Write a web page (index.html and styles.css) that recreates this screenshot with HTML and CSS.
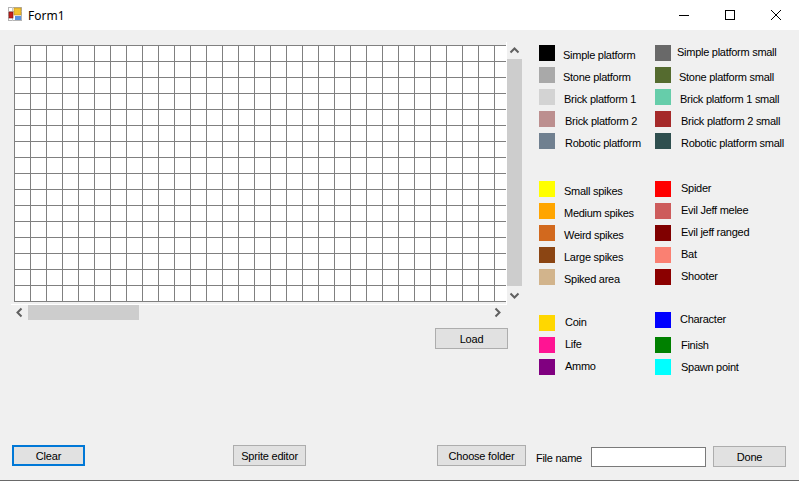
FILE: index.html
```html
<!DOCTYPE html>
<html>
<head>
<meta name="viewport" content="width=device-width, initial-scale=1.0">
<title>Form1</title>
<link rel="stylesheet" href="styles.css">
</head>
<body>

<div class="titlebar">
  <svg class="app-icon" width="14" height="14" viewBox="0 0 14 14">
    <rect x="0.5" y="0.5" width="13" height="13" fill="#fff" stroke="#b4b4b4"/>
    <path d="M4.5 0v14M0 4.5h14M0 9.5h4" stroke="#c8c8c8" fill="none"/>
    <rect x="6" y="1" width="7" height="7" fill="#f2c230" stroke="#b98a20" stroke-width="0.6"/>
    <rect x="1" y="5" width="4" height="6" fill="#c4201c" stroke="#7a1512" stroke-width="0.6"/>
    <rect x="7" y="9" width="6" height="4" fill="#5b94e0"/>
  </svg>
  <span class="title">Form1</span>
  <div class="window-buttons">
    <svg width="12" height="12" viewBox="0 0 12 12"><path d="M1 6.5h10" stroke="#000" fill="none"/></svg>
    <svg width="12" height="12" viewBox="0 0 12 12"><rect x="1.5" y="1.5" width="9" height="9" stroke="#000" fill="none"/></svg>
    <svg width="12" height="12" viewBox="0 0 12 12"><path d="M1 1l10 10M11 1L1 11" stroke="#000" fill="none"/></svg>
  </div>
</div>

<div class="form">
  <div class="main">
    <div class="editor">
      <div class="stage">
        <div class="level-panel"><div class="level-grid"></div></div>
        <div class="vscroll">
          <svg width="15" height="15" viewBox="0 0 15 15"><path d="M3.5 9.5l4-4 4 4" stroke="#606060" stroke-width="2" fill="none"/></svg>
          <div class="vthumb"></div>
          <svg class="varrow-down" width="15" height="15" viewBox="0 0 15 15"><path d="M3.5 5.5l4 4 4-4" stroke="#606060" stroke-width="2" fill="none"/></svg>
        </div>
        <div class="hscroll">
          <svg width="17" height="15" viewBox="0 0 17 15"><path d="M10.5 3.5l-4 4 4 4" stroke="#606060" stroke-width="2" fill="none"/></svg>
          <div class="hthumb"></div>
          <svg class="harrow-right" width="15" height="15" viewBox="0 0 15 15"><path d="M5.5 3.5l4 4-4 4" stroke="#606060" stroke-width="2" fill="none"/></svg>
        </div>
      </div>
      <button class="button load-button">Load</button>
    </div>

    <div class="palette">
      <div class="group">
        <div class="item"><i class="swatch c-black"></i><span class="label g8">Simple platform</span></div>
        <div class="item"><i class="swatch c-dimgray"></i><span class="label g6 up">Simple platform small</span></div>
        <div class="item"><i class="swatch c-darkgray"></i><span class="label g8">Stone platform</span></div>
        <div class="item"><i class="swatch c-olive"></i><span class="label g8">Stone platform small</span></div>
        <div class="item"><i class="swatch c-lightgray"></i><span class="label g9">Brick platform 1</span></div>
        <div class="item"><i class="swatch c-aquamarine"></i><span class="label g9">Brick platform 1 small</span></div>
        <div class="item"><i class="swatch c-rosy"></i><span class="label g10">Brick platform 2</span></div>
        <div class="item"><i class="swatch c-brown"></i><span class="label g10">Brick platform 2 small</span></div>
        <div class="item"><i class="swatch c-slate"></i><span class="label g10">Robotic platform</span></div>
        <div class="item"><i class="swatch c-darkslate"></i><span class="label g10">Robotic platform small</span></div>
      </div>

      <div class="group group-enemies">
        <div class="item"><i class="swatch c-yellow"></i><span class="label g9">Small spikes</span></div>
        <div class="item"><i class="swatch c-red"></i><span class="label g10 up">Spider</span></div>
        <div class="item"><i class="swatch c-orange"></i><span class="label g9">Medium spikes</span></div>
        <div class="item"><i class="swatch c-indian"></i><span class="label g10 up">Evil Jeff melee</span></div>
        <div class="item"><i class="swatch c-chocolate"></i><span class="label g9">Weird spikes</span></div>
        <div class="item"><i class="swatch c-maroon"></i><span class="label g10 up">Evil jeff ranged</span></div>
        <div class="item"><i class="swatch c-saddle"></i><span class="label g9">Large spikes</span></div>
        <div class="item"><i class="swatch c-salmon"></i><span class="label g10 up">Bat</span></div>
        <div class="item"><i class="swatch c-tan"></i><span class="label g9">Spiked area</span></div>
        <div class="item"><i class="swatch c-darkred"></i><span class="label g10 up">Shooter</span></div>
      </div>

      <div class="group group-last">
        <div class="item"><i class="swatch c-gold"></i><span class="label g10 up">Coin</span></div>
        <div class="item"><i class="swatch swatch-high c-blue"></i><span class="label g9 up">Character</span></div>
        <div class="item"><i class="swatch c-pink"></i><span class="label g10 up">Life</span></div>
        <div class="item"><i class="swatch c-green"></i><span class="label g10 flat">Finish</span></div>
        <div class="item"><i class="swatch c-purple"></i><span class="label g10 up">Ammo</span></div>
        <div class="item"><i class="swatch c-cyan"></i><span class="label g10 flat">Spawn point</span></div>
      </div>
    </div>
  </div>

  <div class="footer">
    <button class="button clear-button">Clear</button>
    <button class="button sprite-button">Sprite editor</button>
    <button class="button folder-button">Choose folder</button>
    <span class="file-label">File name</span>
    <input class="file-input" type="text" name="fileName">
    <button class="button done-button">Done</button>
  </div>
</div>

</body>
</html>
```

FILE: styles.css
```css
* {
  box-sizing: border-box;
}

html, body {
  margin: 0;
  height: 481px;
  overflow: hidden;
}

body {
  font: 11px "Liberation Sans", Arial, sans-serif;
  letter-spacing: -0.27px;
  color: #000;
  background-color: #f0f0f0;
  border-bottom: 1px solid #696969;
}

/* title bar */
.titlebar {
  display: flex;
  align-items: center;
  height: 30px;
  padding-left: 8px;
  background-color: #fff;
}

.app-icon {
  margin-right: 6px;
  margin-bottom: 2px;
}

.title {
  font: 12px "Noto Sans", sans-serif;
  letter-spacing: normal;
}

.window-buttons {
  display: flex;
  margin-left: auto;
  margin-right: 17px;
  gap: 34px;
}

/* main form */
.form {
  display: flex;
  flex-direction: column;
  justify-content: space-between;
  height: 450px;
}

.main {
  display: flex;
  padding: 12px 0 0 11px;
}

.editor {
  display: flex;
  flex-direction: column;
  align-items: flex-end;
  width: 511px;
}

.stage {
  display: grid;
  grid-template-columns: 496px 15px;
  grid-template-rows: 263px 16px;
}

.level-panel {
  padding: 3px 0 0 3px;
  border-right: 1px solid #fff;
  border-bottom: 1px solid #fff;
  overflow: hidden;
}

.level-grid {
  height: 257px;
  background-color: #fff;
  background-image:
    linear-gradient(to right, #808080 1px, transparent 1px),
    linear-gradient(to bottom, #808080 1px, transparent 1px);
  background-size: 16px 16px;
  border-bottom: 1px solid #808080;
}

.vscroll {
  display: flex;
  flex-direction: column;
  margin-top: 1px;
}

.vscroll svg {
  display: block;
  flex: none;
}

.vthumb {
  flex: none;
  height: 227px;
  margin-top: 1px;
  background-color: #cdcdcd;
}

.vscroll .varrow-down {
  margin-top: 2px;
}

.hscroll {
  display: flex;
  align-items: center;
  height: 15px;
}

.hthumb {
  width: 111px;
  height: 15px;
  background-color: #cdcdcd;
}

.harrow-right {
  margin-left: auto;
  margin-right: 2px;
}

.button {
  width: 73px;
  height: 21px;
  padding: 0;
  font: 11px "Liberation Sans", Arial, sans-serif;
  letter-spacing: -0.2px;
  color: #000;
  background-color: #e1e1e1;
  border: 1px solid #adadad;
}

.load-button {
  margin-top: 7px;
  margin-right: 14px;
}

/* colour palette */
.palette {
  margin-left: 17px;
  margin-top: 3px;
}

.group {
  display: grid;
  grid-template-columns: 116px 1fr;
  grid-auto-rows: 16px;
  row-gap: 6px;
  margin-bottom: 32px;
}

.group-enemies {
  margin-bottom: 30px;
}

.group-last {
  margin-bottom: 0;
}

.item {
  display: flex;
  white-space: nowrap;
}

.swatch {
  display: block;
  flex: none;
  width: 16px;
  height: 16px;
}

.swatch-high {
  margin-top: -3px;
}

.label {
  line-height: 16px;
  margin-top: 2px;
}

.up {
  margin-top: -1px;
}

.flat {
  margin-top: 0;
}

.swatch-high + .up {
  margin-top: -4px;
}

.g6 { margin-left: 6px; }
.g8 { margin-left: 8px; }
.g9 { margin-left: 9px; }
.g10 { margin-left: 10px; }

.c-black { background-color: #000000; }
.c-dimgray { background-color: #696969; }
.c-darkgray { background-color: #a9a9a9; }
.c-olive { background-color: #556b2f; }
.c-lightgray { background-color: #d3d3d3; }
.c-aquamarine { background-color: #66cdaa; }
.c-rosy { background-color: #bc8f8f; }
.c-brown { background-color: #a52a2a; }
.c-slate { background-color: #708090; }
.c-darkslate { background-color: #2f4f4f; }
.c-yellow { background-color: #ffff00; }
.c-red { background-color: #ff0000; }
.c-orange { background-color: #ffa500; }
.c-indian { background-color: #cd5c5c; }
.c-chocolate { background-color: #d2691e; }
.c-maroon { background-color: #800000; }
.c-saddle { background-color: #8b4513; }
.c-salmon { background-color: #fa8072; }
.c-tan { background-color: #d2b48c; }
.c-darkred { background-color: #8b0000; }
.c-gold { background-color: #ffd700; }
.c-blue { background-color: #0000ff; }
.c-pink { background-color: #ff1493; }
.c-green { background-color: #008000; }
.c-purple { background-color: #800080; }
.c-cyan { background-color: #00ffff; }

/* bottom row */
.footer {
  display: flex;
  align-items: flex-start;
  height: 35px;
  padding-left: 12px;
}

.clear-button {
  border: 2px solid #0078d7;
}

.sprite-button {
  margin-left: 148px;
}

.folder-button {
  width: 89px;
  margin-left: 131px;
}

.file-label {
  width: 49px;
  margin-left: 10px;
  margin-top: 4px;
  line-height: 18px;
}

.file-input {
  width: 115px;
  height: 20px;
  margin-left: 6px;
  margin-top: 2px;
  background-color: #fff;
  border: 1px solid #7a7a7a;
}

.done-button {
  margin-left: 7px;
  margin-top: 1px;
}
```
